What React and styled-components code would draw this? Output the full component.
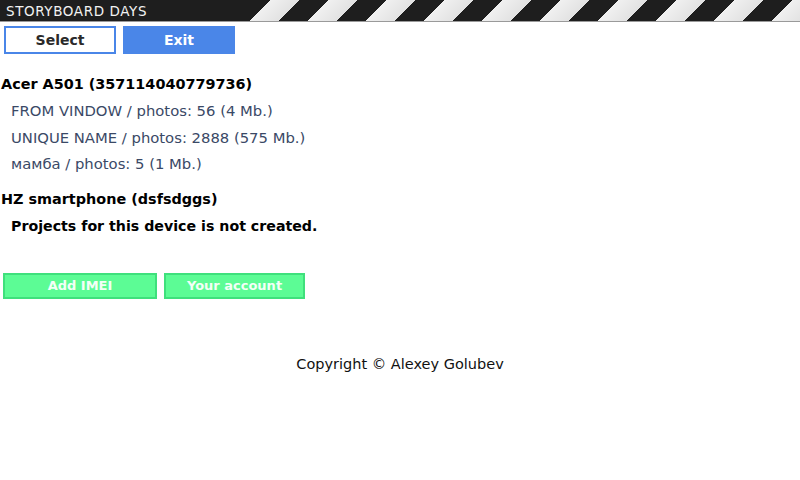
import React from "react";
import styled, { createGlobalStyle } from "styled-components";

const GlobalStyle = createGlobalStyle`
  body {
    margin: 0;
    background: #ffffff;
    font-family: "DejaVu Sans", Verdana, sans-serif;
  }
`;

const devices = [
  {
    name: "Acer A501 (357114040779736)",
    projects: [
      "FROM VINDOW / photos: 56 (4 Mb.)",
      "UNIQUE NAME / photos: 2888 (575 Mb.)",
      "мамба / photos: 5 (1 Mb.)",
    ],
  },
  { name: "HZ smartphone (dsfsdggs)", projects: [] },
];

function App() {
  return (
    <Page>
      <GlobalStyle />
      <Header>
        <Title>STORYBOARD DAYS</Title>
        <Stripes />
      </Header>
      <TopBar>
        <NavButton>Select</NavButton>
        <NavButton primary>Exit</NavButton>
      </TopBar>
      <Devices>
        {devices.map((d) => (
          <Device key={d.name}>
            <DeviceName>{d.name}</DeviceName>
            {d.projects.length ? (
              d.projects.map((p) => <Project key={p}>{p}</Project>)
            ) : (
              <Empty>Projects for this device is not created.</Empty>
            )}
          </Device>
        ))}
      </Devices>
      <Actions>
        <GreenButton width={154}>Add IMEI</GreenButton>
        <GreenButton width={141}>Your account</GreenButton>
      </Actions>
      <Footer>Copyright © Alexey Golubev</Footer>
    </Page>
  );
}

const Page = styled.div`
  width: 800px;
  min-height: 480px;
`;

const Header = styled.div`
  display: flex;
  height: 21px;
  background: #1e1e1e;
  border-bottom: 1px solid #9a9a9a;
`;

const Title = styled.div`
  width: 250px;
  padding-left: 6px;
  box-sizing: border-box;
  color: #f2f2f2;
  font-family: "DejaVu Sans", sans-serif;
  font-size: 13.5px;
  line-height: 22px;
  letter-spacing: 0.6px;
`;

const Stripes = styled.div`
  flex: 1;
  background: repeating-linear-gradient(
    135deg,
    #1e1e1e 0px,
    #1e1e1e 14.8px,
    #f0f0f0 14.8px,
    #e2e2e2 35.3px,
    #1e1e1e 35.3px,
    #1e1e1e 41px
  );
`;

const TopBar = styled.div`
  display: flex;
  gap: 7px;
  padding: 4px 0 0 4px;
`;

const NavButton = styled.button`
  width: 112px;
  height: 28px;
  box-sizing: border-box;
  border: 2px solid #4a86e8;
  background: ${(p) => (p.primary ? "#4a86e8" : "#ffffff")};
  color: ${(p) => (p.primary ? "#ffffff" : "#2a2a2a")};
  font-family: "DejaVu Sans", Verdana, sans-serif;
  font-weight: bold;
  font-size: 14px;
  padding: 0;
`;

const Devices = styled.div`
  display: flex;
  flex-direction: column;
  gap: 8px;
  margin-top: 17px;
`;

const Device = styled.div`
  display: flex;
  flex-direction: column;
`;

const DeviceName = styled.div`
  padding-left: 1px;
  font-weight: bold;
  font-size: 14.4px;
  line-height: 27px;
  color: #000;
`;

const Project = styled.div`
  padding-left: 11px;
  font-size: 14.8px;
  line-height: 26.5px;
  color: #3a4966;
`;

const Empty = styled.div`
  padding-left: 11px;
  font-weight: bold;
  font-size: 14.2px;
  line-height: 27px;
  color: #000;
`;

const Actions = styled.div`
  display: flex;
  gap: 7px;
  padding-left: 3px;
  margin-top: 33px;
`;

const GreenButton = styled.button`
  width: ${(p) => p.width}px;
  height: 26px;
  box-sizing: border-box;
  border: 2px solid #3fe07c;
  background: #5cfc95;
  color: #f4fff7;
  font-family: "DejaVu Sans", Verdana, sans-serif;
  font-weight: bold;
  font-size: 13px;
  padding: 0;
`;

const Footer = styled.div`
  margin-top: 54px;
  text-align: center;
  font-size: 14.5px;
  line-height: 22px;
  color: #111;
`;

export default App;
